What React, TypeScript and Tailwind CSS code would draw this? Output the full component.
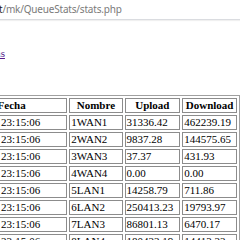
import React from 'react';

const rows = [
  ['1WAN1', '31336.42', '462239.19'],
  ['2WAN2', '9837.28', '144575.65'],
  ['3WAN3', '37.37', '431.93'],
  ['4WAN4', '0.00', '0.00'],
  ['5LAN1', '14258.79', '711.86'],
  ['6LAN2', '250413.23', '19793.97'],
  ['7LAN3', '86801.13', '6470.17'],
  ['8LAN4', '180422.19', '14413.22'],
];

const th = 'border border-[#8c8c8c] h-[15px] px-[1px] py-0 leading-[13px] font-bold text-center';
const td = 'border border-[#8c8c8c] h-[15px] px-[1px] py-0 leading-[13px] text-left font-normal';

const App: React.FC = () => {
  return (
    <div className="w-[240px] h-[240px] overflow-hidden bg-white">
      {/* address bar */}
      <div className="h-[20px] border-b border-[#dadce0] shadow-[0_1px_1px_rgba(0,0,0,0.06)] flex items-center whitespace-nowrap text-[10px] tracking-[-0.2px] font-['Noto_Sans',sans-serif]">
        <span className="text-[#202124] -ml-[1px]">t</span>
        <span className="text-[#7a7a7a]">/mk/QueueStats/stats.php</span>
      </div>

      {/* page body, scrolled horizontally */}
      <div className="-ml-[55px] pl-[8px] font-['Liberation_Serif',serif] text-[11px] text-black whitespace-nowrap">
        <div className="h-[25px]" />
        <a href="#" className="inline-block text-[#551a8b] underline leading-[13px]">Estadisticas</a>
        <div className="h-[33px]" />
        <table className="border-separate border-spacing-[2px] border border-[#a0a0a0]">
          <thead>
            <tr>
              <th className={th + ' w-[113px]'}>Fecha</th>
              <th className={th + ' w-[54px]'}>Nombre</th>
              <th className={th + ' w-[56px]'}>Upload</th>
              <th className={th + ' w-[55px]'}>Download</th>
            </tr>
          </thead>
          <tbody>
            {rows.map((r) => (
              <tr key={r[0]}>
                <td className={td}>2015-1-8 23:15:06</td>
                <td className={td}>{r[0]}</td>
                <td className={td}>{r[1]}</td>
                <td className={td}>{r[2]}</td>
              </tr>
            ))}
          </tbody>
        </table>
      </div>
    </div>
  );
};

export default App;
